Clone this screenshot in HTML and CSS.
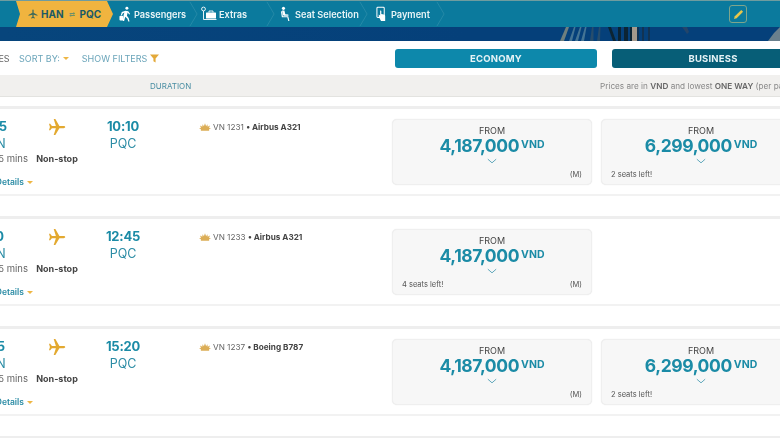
FILE: index.html
```html
<!DOCTYPE html>
<html lang="en">
<head>
<meta charset="utf-8">
<title>Select flight</title>
<link rel="stylesheet" href="styles.css">
</head>
<body>
<svg class="defs" width="0" height="0" aria-hidden="true">
  <defs>
    <symbol id="plane" viewBox="0 0 24 24"><path d="M23 12c0-.9-1-1.500-2.200-1.500h-5.600L9.800 1.200H7.600l2.900 9.300H5.200L2.900 7.600H1.300L2.600 12 1.300 16.400h1.600l2.300-2.900h5.300l-2.900 9.300h2.200l5.400-9.300h5.600C22 13.500 23 12.900 23 12z"/></symbol>
    <symbol id="lotus" viewBox="0 0 16 10"><path d="M8 0l1.500 4 1.700-2.600.4 3.400 3-1.800-1.200 3.400L16 6.800 13.500 8v2h-11V8L0 6.800l2.600-.4L1.400 3l3 1.800.4-3.400L6.500 4z"/></symbol>
    <symbol id="chev" viewBox="0 0 12 6"><path d="M1 .8l5 4.400 5-4.400" fill="none" stroke="currentColor" stroke-width="1.200"/></symbol>
    <symbol id="sep" viewBox="0 0 10 27"><path d="M1 0l8 13.500L1 27" fill="none" stroke="currentColor" stroke-width=".8"/></symbol>
  </defs>
</svg>
<div class="page">
  <header class="masthead">
    <nav class="steps">
      <div class="trip">
        <svg class="trip-plane"><use href="#plane"/></svg>
        <span>HAN</span><span class="swap">⇄</span><span>PQC</span>
      </div>
      <div class="step step-pax">
        <svg class="ico" viewBox="0 0 14 16"><circle cx="8.500" cy="1.800" r="1.600" fill="#fff"/><path d="M7 4.500l3 .5 2 3-1 .5-1.700-2-.8 3.500 2 2.500.8 3.500H10l-1-3-2.200-2L5.500 15.500H4l1-6.500.8-2.500-1.800 1L3 9.500 2 9l1-3.200z" fill="#fff"/><rect x=".5" y="10" width="4" height="5" rx="1" fill="#fff"/></svg>
        <span>Passengers</span>
        <svg class="sep"><use href="#sep"/></svg>
      </div>
      <div class="step step-ext">
        <svg class="ico ico-wide" viewBox="0 0 16 16"><circle cx="2.500" cy="3" r="1.900" fill="none" stroke="#fff" stroke-width=".9"/><path d="M2.500 5v8.500H15.500" fill="none" stroke="#fff" stroke-width=".9"/><rect x="5" y="6.500" width="10" height="6" rx=".6" fill="#fff"/><path d="M8 6.500V5h4v1.500" fill="none" stroke="#fff" stroke-width=".9"/></svg>
        <span>Extras</span>
        <svg class="sep"><use href="#sep"/></svg>
      </div>
      <div class="step step-seat">
        <svg class="ico" viewBox="0 0 12 16"><circle cx="3.800" cy="1.800" r="1.700" fill="#fff"/><path d="M2.200 4.200h2.600l1 4 3.200.4.300 1.300H4.500L3 9z" fill="#fff"/><path d="M1 5l1 6.500h6l1 4h1.300L9 10.500H3.200L2 5z" fill="#fff"/></svg>
        <span>Seat Selection</span>
        <svg class="sep"><use href="#sep"/></svg>
      </div>
      <div class="step step-pay">
        <svg class="ico" viewBox="0 0 12 16"><rect x="1" y=".7" width="8" height="11" rx="1" fill="none" stroke="#fff" stroke-width="1.100"/><path d="M4.500 4.500c.6-.6 1.200-.4 1.300.3V8l2.700.5c1 .2 1.500.8 1.500 1.800V15.500H5.500L3 11V8.500l1.500 1z" fill="#fff"/></svg>
        <span>Payment</span>
        <svg class="sep"><use href="#sep"/></svg>
      </div>
      <button class="edit" type="button" aria-label="Edit">
        <svg viewBox="0 0 12 12" width="11" height="11"><path d="M9 1l2 2-7 7-3 1 1-3z" fill="#e8c64a"/></svg>
      </button>
    </nav>
    <div class="banner">
      <svg class="palms" viewBox="0 0 240 14" preserveAspectRatio="none">
        <path d="M20 14L26 0h3L24 14z" fill="#8a8f80" opacity=".8"/>
        <path d="M29 14L34 0h1.500L32 14zM35 14L40 0h1.500L38 14zM41 14L45 0h1.500L44 14z" fill="#5f8aa0" opacity=".7"/>
        <path d="M50 14L52 0h1.500V14zM57 14L59 0h1.500L60 14z" fill="#2b4f6a" opacity=".9"/>
        <path d="M68 0h3L76 14h-3zM78 14V0h3V14zM84 14V0h4V14zM90 14V0h2V14z" fill="#0c2433"/>
        <path d="M92 14V0h5V14z" fill="#a59a8c"/>
        <path d="M97 14V0h2V14zM102 14V0h2V14zM108 14V0h2V14z" fill="#14304a" opacity=".8"/>
        <path d="M142 0h5l2 5-2 2-2-3z" fill="#24456a"/>
        <path d="M228 14l6-8 6-6V14z" fill="#7c8c90" opacity=".85"/>
      </svg>
    </div>
  </header>

  <section class="toolbar">
    <div class="tools">
      <span class="tool tool-cut">ALL FARES</span>
      <span class="tool tool-sort">SORT BY: <i class="caret"></i></span>
      <span class="tool tool-filter">SHOW FILTERS
        <svg viewBox="0 0 10 10" width="9" height="9"><path d="M0 .5h10L6.200 5v4.500L3.800 8V5z" fill="#e3a93a"/></svg>
      </span>
    </div>
    <div class="tabs">
      <div class="tab tab-eco">ECONOMY</div>
      <div class="tab tab-bus">BUSINESS</div>
    </div>
  </section>

  <section class="thead">
    <span class="thead-dur">DURATION</span>
    <span class="thead-note">Prices are in <b>VND</b> and lowest <b>ONE WAY</b> (per passenger)</span>
  </section>

  <main class="results">
    <article class="flight">
      <div class="route">
        <div class="time-col"><div class="time">08:45</div><div class="code">HAN</div></div>
        <div class="plane-col"><svg class="plane-ico"><use href="#plane"/></svg></div>
        <div class="arr-col"><div class="time">10:10</div><div class="code">PQC</div></div>
        <div class="dur">1h 25 mins</div>
        <div class="stop">Non-stop</div>
        <div class="details">Flight Details <i class="caret"></i></div>
      </div>
      <div class="info"><svg class="lotus"><use href="#lotus"/></svg>VN 1231 <b>• Airbus A321</b></div>
      <div class="fares">
        <div class="fare"><div class="from">FROM</div><div class="price">4,187,000<sup>VND</sup></div><svg class="chev"><use href="#chev"/></svg><div class="note"><span></span><span>(M)</span></div></div>
        <div class="fare"><div class="from">FROM</div><div class="price">6,299,000<sup>VND</sup></div><svg class="chev"><use href="#chev"/></svg><div class="note"><span>2 seats left!</span><span></span></div></div>
      </div>
    </article>

    <article class="flight">
      <div class="route">
        <div class="time-col"><div class="time">11:20</div><div class="code">HAN</div></div>
        <div class="plane-col"><svg class="plane-ico"><use href="#plane"/></svg></div>
        <div class="arr-col"><div class="time">12:45</div><div class="code">PQC</div></div>
        <div class="dur">1h 25 mins</div>
        <div class="stop">Non-stop</div>
        <div class="details">Flight Details <i class="caret"></i></div>
      </div>
      <div class="info"><svg class="lotus"><use href="#lotus"/></svg>VN 1233 <b>• Airbus A321</b></div>
      <div class="fares">
        <div class="fare"><div class="from">FROM</div><div class="price">4,187,000<sup>VND</sup></div><svg class="chev"><use href="#chev"/></svg><div class="note"><span>4 seats left!</span><span>(M)</span></div></div>
      </div>
    </article>

    <article class="flight">
      <div class="route">
        <div class="time-col"><div class="time">13:55</div><div class="code">HAN</div></div>
        <div class="plane-col"><svg class="plane-ico"><use href="#plane"/></svg></div>
        <div class="arr-col"><div class="time">15:20</div><div class="code">PQC</div></div>
        <div class="dur">1h 25 mins</div>
        <div class="stop">Non-stop</div>
        <div class="details">Flight Details <i class="caret"></i></div>
      </div>
      <div class="info"><svg class="lotus"><use href="#lotus"/></svg>VN 1237 <b>• Boeing B787</b></div>
      <div class="fares">
        <div class="fare"><div class="from">FROM</div><div class="price">4,187,000<sup>VND</sup></div><svg class="chev"><use href="#chev"/></svg><div class="note"><span></span><span>(M)</span></div></div>
        <div class="fare"><div class="from">FROM</div><div class="price">6,299,000<sup>VND</sup></div><svg class="chev"><use href="#chev"/></svg><div class="note"><span>2 seats left!</span><span></span></div></div>
      </div>
    </article>
    <div class="next-band"></div>
  </main>
</div>
</body>
</html>
```
FILE: styles.css
```css
* { box-sizing: border-box; }
html, body { margin: 0; padding: 0; background: #fff; overflow: hidden; }
body { width: 780px; height: 438px; font-family: Inter, "Open Sans", sans-serif; color: #444; }
.defs { position: absolute; }
.page { width: 780px; height: 438px; overflow: hidden; filter: blur(.35px); }

/* masthead */
.masthead { height: 41px; background: linear-gradient(90deg, #07457c, #05407a 60%); }
.steps { height: 27px; background: #0b7a9d; border-top: 1px solid #6f9c9f; display: flex; align-items: center; padding-left: 16px; position: relative; }
.trip { width: 97px; height: 26px; background: #f0b43f; color: #1c5a66; font-size: 10px; font-weight: 700; display: flex; align-items: center; padding-left: 12px;
  clip-path: polygon(0 0, 91px 0, 97px 13px, 91px 100%, 0 100%, 4px 13px); }
.trip-plane { width: 10px; height: 10px; fill: #3f6a5a; margin-right: 3px; transform: rotate(-90deg); }
.swap { font-size: 7px; margin: 0 5px; color: #6d8f6a; font-weight: 400; }
.step { height: 26px; display: flex; align-items: center; color: #e8f4f6; font-size: 9.200px; font-weight: 600; flex: none; }
.step span { white-space: nowrap; }
.ico { width: 13px; height: 16px; margin-right: 2px; flex: none; }
.ico-wide { width: 16px; }
.sep { width: 9px; height: 26px; color: #2f8fab; margin-left: auto; flex: none; }
.step-pax { width: 85px; padding-left: 6px; }
.step-ext { width: 77px; padding-left: 3px; }
.step-seat { width: 93px; padding-left: 5px; }
.step-pay { width: 77px; padding-left: 8px; }
.step-seat .ico, .step-pay .ico { width: 11px; margin-right: 4px; }
.edit { margin-left: auto; margin-right: 33px; width: 18px; height: 18px; padding: 0; border: 1px solid #7fa58c; border-radius: 3px; background: transparent; display: flex; align-items: center; justify-content: center; }
.banner { height: 14px; display: flex; justify-content: flex-end; }
.palms { width: 240px; height: 14px; display: block; }

/* toolbar */
.toolbar { height: 34px; display: flex; align-items: center; }
.tools { width: 395px; flex: none; display: flex; align-items: center; font-size: 9px; color: #6ba5ba; margin-left: -37px; white-space: nowrap; }
.tool { display: flex; align-items: center; gap: 5px; }
.tool-cut { color: #666; width: 56px; }
.tool-sort { gap: 3px; margin-right: 13px; }
.tool-filter { gap: 3px; }
.caret { display: inline-block; width: 0; height: 0; border-left: 3px solid transparent; border-right: 3px solid transparent; border-top: 3.500px solid #eeb644; }
.tabs { display: flex; gap: 15px; margin-left: 37px; }
.tab { width: 202px; height: 19px; border-radius: 3px; color: #e6f3f6; font-size: 9.500px; font-weight: 700; display: flex; align-items: center; justify-content: center; letter-spacing: .2px; }
.tab-eco { background: #0d88ab; }
.tab-bus { background: #075e77; }

/* table head */
.thead { height: 22px; background: #f1f0ee; border-bottom: 1px solid #e3e3e0; display: flex; align-items: center; font-size: 8px; white-space: nowrap; padding-left: 150px; }
.thead-dur { color: #4a8ea3; width: 450px; flex: none; }
.thead-note { color: #888; flex: none; font-size: 8.200px; }
.thead-note b { color: #666; font-weight: 600; }

/* rows */
.results { margin-top: 9px; margin-left: -40px; width: 860px; }
.flight { height: 90px; margin-bottom: 20px; border-top: 3px solid #eeeeee; border-bottom: 2px solid #f2f2f2; display: flex; align-items: flex-start; }
.route { width: 239px; flex: none; display: grid; grid-template-columns: 68px 58px 74px; grid-template-rows: 32px 15px auto; padding-top: 10px; }
.time-col, .arr-col, .plane-col { text-align: center; }
.time-col { padding-right: 4px; }
.time-col .time { margin-right: 8px; }
.time { font-size: 13px; font-weight: 700; color: #1b8ba6; line-height: 15px; letter-spacing: -.2px; }
.code { font-size: 12.500px; color: #2b8ca5; line-height: 17px; margin-top: 1px; }
.plane-ico { width: 18px; height: 18px; fill: #e3a930; display: block; margin: -1px auto 0; }
.dur { font-size: 9.500px; color: #666; text-align: right; white-space: nowrap; line-height: 15px; }
.stop { font-size: 9px; font-weight: 700; color: #444; text-align: center; line-height: 15px; white-space: nowrap; }
.details { grid-column: 1; font-size: 8.500px; font-weight: 600; color: #2b8ca5; white-space: nowrap; display: flex; align-items: center; justify-content: flex-end; gap: 3px; margin-right: -5px; margin-top: 11px; }
.info { width: 193px; flex: none; font-size: 8.200px; color: #666; padding-top: 13px; display: flex; align-items: center; white-space: pre; }
.info b { color: #444; font-weight: 700; }
.lotus { width: 12px; height: 8px; fill: #dcae57; margin-right: 2px; flex: none; }
.fares { display: flex; gap: 9px; padding-top: 10px; }
.fare { width: 200px; height: 66px; background: #f7f7f7; border: 1px solid #efefef; border-radius: 5px; box-shadow: 0 0 1px #ddd; display: flex; flex-direction: column; align-items: center; padding: 5px 9px 0; }
.from { font-size: 9px; color: #444; line-height: 12px; }
.price { font-size: 17.500px; font-weight: 700; color: #1b8ba6; line-height: 18px; letter-spacing: -.4px; white-space: nowrap; }
.price sup { font-size: 10.500px; font-weight: 700; margin-left: 2px; letter-spacing: 0; vertical-align: 4px; line-height: 0; }
.chev { width: 10px; height: 6px; color: #62a9bc; margin-top: 3px; flex: none; }
.note { margin-top: auto; width: 100%; display: flex; justify-content: space-between; font-size: 7.500px; color: #555; padding-bottom: 5px; }
.next-band { height: 6px; background: #eee; }
```
